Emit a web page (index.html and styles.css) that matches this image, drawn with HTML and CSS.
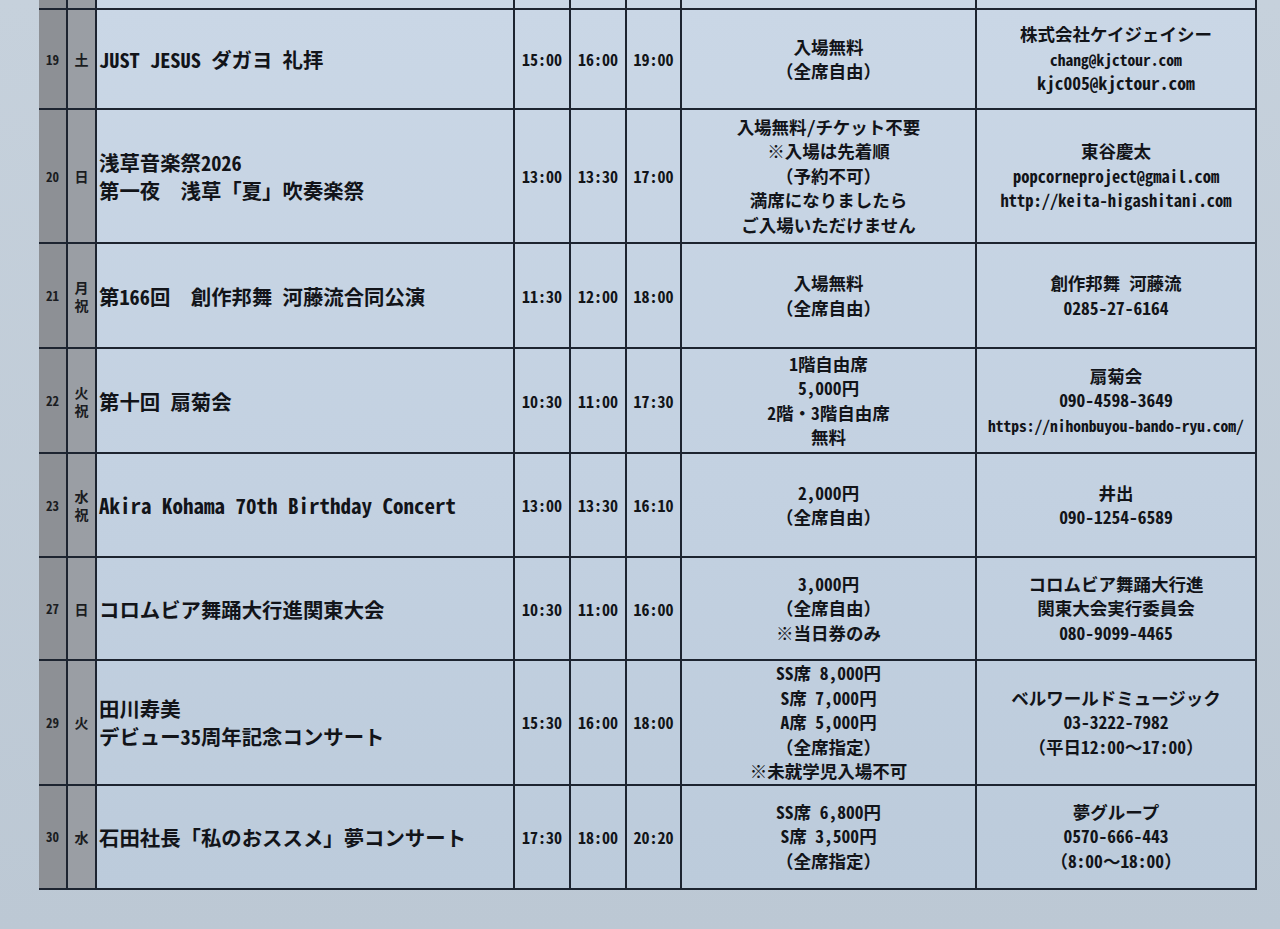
FILE: index.html
```html
<!DOCTYPE html>
<html lang="ja">
<head>
<meta charset="utf-8">
<title>公演スケジュール</title>
<link rel="stylesheet" href="styles.css">
</head>
<body>
<div class="sheet">
<table class="sched">
<colgroup>
<col class="c-num"><col class="c-day"><col class="c-title"><col class="c-t"><col class="c-t"><col class="c-t2"><col class="c-price"><col class="c-contact">
</colgroup>
<tbody>
<tr class="r0"><td class="num"></td><td class="day"></td><td></td><td></td><td></td><td></td><td></td><td></td></tr>

<tr class="r19">
<td class="num">19</td><td class="day">土</td>
<td class="title"><span class="h">JUST JESUS </span>ダガヨ<span class="h"> </span>礼拝</td>
<td class="time">15:00</td><td class="time">16:00</td><td class="time">19:00</td>
<td class="price">入場無料<br>（全席自由）</td>
<td class="contact">株式会社ケイジェイシー<br><span class="h xs">chang@kjctour.com</span><br><span class="h">kjc005@kjctour.com</span></td>
</tr>

<tr class="r20">
<td class="num">20</td><td class="day">日</td>
<td class="title"><div class="tline">浅草音楽祭<span class="h">2026</span></div><div class="tline">第一夜　浅草「夏」吹奏楽祭</div></td>
<td class="time">13:00</td><td class="time">13:30</td><td class="time">17:00</td>
<td class="price">入場無料<span class="h">/</span>チケット不要<br>※入場は先着順<br>（予約不可）<br>満席になりましたら<br>ご入場いただけません</td>
<td class="contact">東谷慶太<br><span class="h sm">popcorneproject@gmail.com</span><br><span class="h sm">http://keita-higashitani.com</span></td>
</tr>

<tr class="r21">
<td class="num">21</td><td class="day">月<br>祝</td>
<td class="title">第<span class="h">166</span>回　創作邦舞<span class="h"> </span>河藤流合同公演</td>
<td class="time">11:30</td><td class="time">12:00</td><td class="time">18:00</td>
<td class="price">入場無料<br>（全席自由）</td>
<td class="contact">創作邦舞<span class="h"> </span>河藤流<br><span class="h">0285-27-6164</span></td>
</tr>

<tr class="r22">
<td class="num">22</td><td class="day">火<br>祝</td>
<td class="title">第十回<span class="h"> </span>扇菊会</td>
<td class="time">10:30</td><td class="time">11:00</td><td class="time">17:30</td>
<td class="price"><span class="h">1</span>階自由席<br><span class="h">5,000</span>円<br><span class="h">2</span>階・<span class="h">3</span>階自由席<br>無料</td>
<td class="contact">扇菊会<br><span class="h">090-4598-3649</span><br><span class="h url">https://nihonbuyou-bando-ryu.com/</span></td>
</tr>

<tr class="r23">
<td class="num">23</td><td class="day">水<br>祝</td>
<td class="title"><span class="h lat">Akira Kohama 70th Birthday Concert</span></td>
<td class="time">13:00</td><td class="time">13:30</td><td class="time">16:10</td>
<td class="price"><span class="h">2,000</span>円<br>（全席自由）</td>
<td class="contact">井出<br><span class="h">090-1254-6589</span></td>
</tr>

<tr class="r27">
<td class="num">27</td><td class="day">日</td>
<td class="title">コロムビア舞踊大行進関東大会</td>
<td class="time">10:30</td><td class="time">11:00</td><td class="time">16:00</td>
<td class="price"><span class="h">3,000</span>円<br>（全席自由）<br>※当日券のみ</td>
<td class="contact">コロムビア舞踊大行進<br>関東大会実行委員会<br><span class="h">080-9099-4465</span></td>
</tr>

<tr class="r29">
<td class="num">29</td><td class="day">火</td>
<td class="title"><div class="tline">田川寿美</div><div class="tline">デビュー<span class="h">35</span>周年記念コンサート</div></td>
<td class="time">15:30</td><td class="time">16:00</td><td class="time">18:00</td>
<td class="price"><span class="h">SS</span>席<span class="h"> 8,000</span>円<br><span class="h">S</span>席<span class="h"> 7,000</span>円<br><span class="h">A</span>席<span class="h"> 5,000</span>円<br>（全席指定）<br>※未就学児入場不可</td>
<td class="contact">ベルワールドミュージック<br><span class="h">03-3222-7982</span><br>（平日<span class="h">12:00</span>～<span class="h">17:00</span>）</td>
</tr>

<tr class="r30">
<td class="num">30</td><td class="day">水</td>
<td class="title">石田社長「私のおススメ」夢コンサート</td>
<td class="time">17:30</td><td class="time">18:00</td><td class="time">20:20</td>
<td class="price"><span class="h">SS</span>席<span class="h"> 6,800</span>円<br><span class="h">S</span>席<span class="h"> 3,500</span>円<br>（全席指定）</td>
<td class="contact">夢グループ<br><span class="h">0570-666-443</span><br>（<span class="h">8:00</span>～<span class="h">18:00</span>）</td>
</tr>
</tbody>
</table>
</div>
</body>
</html>
```

FILE: styles.css
```css
html, body {
  margin: 0;
  padding: 0;
}
body {
  background: linear-gradient(180deg, #c6d1dc 0%, #bcc8d4 100%);
  width: 1280px;
  height: 929px;
  overflow: hidden;
  font-family: "Noto Sans CJK JP", "Noto Sans", sans-serif;
  color: #121419;
}
.sheet {
  padding-left: 39px;
}
.sched {
  border-collapse: collapse;
  table-layout: fixed;
  width: 1217px;
  background: linear-gradient(180deg, #cad7e6 0%, #c3d1e1 55%, #bccbdb 100%);
}
.c-num { width: 28px; }
.c-day { width: 29px; }
.c-title { width: 418px; }
.c-t { width: 56px; }
.c-t2 { width: 55px; }
.c-price { width: 295px; }
.c-contact { width: 280px; }

.sched td {
  border: 2px solid #1d2430;
  padding: 0;
  vertical-align: middle;
  font-weight: 700;
  overflow: hidden;
  white-space: nowrap;
}
.sched td.num {
  border-left: none;
}
.sched tr.r0 td {
  border-top: none;
}
.r0 { height: 9px; }
.r19 { height: 100px; }
.r20 { height: 134px; }
.r21 { height: 105px; }
.r22 { height: 105px; }
.r23 { height: 104px; }
.r27 { height: 103px; }
.r29 { height: 124px; }
.r30 { height: 104px; }

.h {
  font-feature-settings: "hwid" 1;
}
.num {
  background: #8d9095;
  text-align: center;
  font-size: 13px;
  font-feature-settings: "hwid" 1;
  color: #1a1c21;
}
.day {
  background: #9a9ea4;
  text-align: center;
  font-size: 14px;
  line-height: 18px;
  color: #1a1c21;
}
.sched td.title {
  font-size: 20.4px;
  line-height: 28px;
  padding-left: 2px;
  text-align: left;
}
.tline {
  height: 28px;
  line-height: 28px;
}
.title .lat {
  font-size: 21px;
}
.time {
  text-align: center;
  font-size: 16px;
  font-feature-settings: "hwid" 1;
}
.price {
  text-align: center;
  font-size: 17.5px;
  line-height: 24.5px;
}
.contact {
  text-align: center;
  font-size: 17.5px;
  line-height: 24.5px;
}
.contact .xs {
  font-size: 15.5px;
}
.contact .sm {
  font-size: 16.5px;
}
.contact .url {
  font-size: 15.5px;
}
```
